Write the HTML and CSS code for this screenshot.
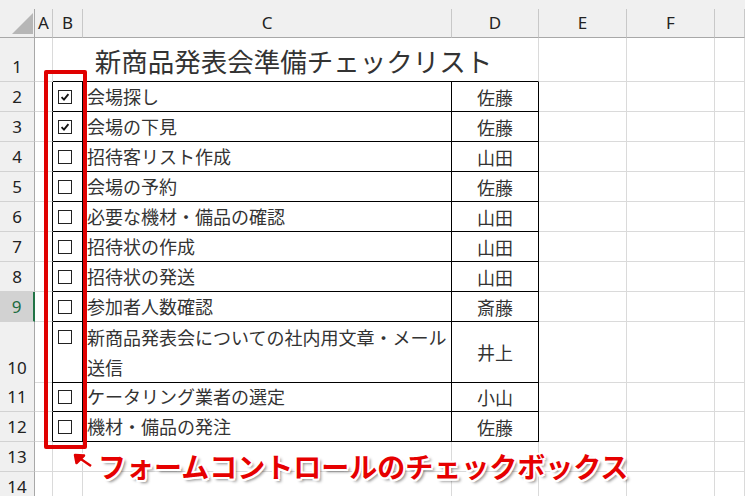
FILE: index.html
```html
<!DOCTYPE html>
<html lang="ja">
  <head>
    <meta charset="UTF-8" />
    <title>新商品発表会準備チェックリスト</title>
    <link rel="stylesheet" href="styles.css">
  </head>
  <body>
    <div class="sheet">
      <!-- column headers -->
      <div class="row head">
        <div class="cell corner"><span class="tri"></span></div>
        <div class="cell hc">A</div>
        <div class="cell hc">B</div>
        <div class="cell hc">C</div>
        <div class="cell hc">D</div>
        <div class="cell hc">E</div>
        <div class="cell hc">F</div>
        <div class="cell hc"></div>
      </div>

      <div class="row r1">
        <div class="cell rn">1</div>
        <div class="cell"></div>
        <div class="cell title">新商品発表会準備チェックリスト</div>
        <div class="cell"></div>
        <div class="cell"></div>
        <div class="cell"></div>
      </div>

      <div class="row">
        <div class="cell rn">2</div>
        <div class="cell edge"></div>
        <div class="cell tb cb"><span class="box on"><svg viewBox="0 0 14 14"><path d="M3 7.2 L5.8 10 L11 3.6" /></svg></span></div>
        <div class="cell tb tx">会場探し</div>
        <div class="cell tb nm">佐藤</div>
        <div class="cell"></div>
        <div class="cell"></div>
        <div class="cell"></div>
      </div>

      <div class="row">
        <div class="cell rn">3</div>
        <div class="cell edge"></div>
        <div class="cell tb cb"><span class="box on"><svg viewBox="0 0 14 14"><path d="M3 7.2 L5.8 10 L11 3.6" /></svg></span></div>
        <div class="cell tb tx">会場の下見</div>
        <div class="cell tb nm">佐藤</div>
        <div class="cell"></div>
        <div class="cell"></div>
        <div class="cell"></div>
      </div>

      <div class="row">
        <div class="cell rn">4</div>
        <div class="cell edge"></div>
        <div class="cell tb cb"><span class="box"></span></div>
        <div class="cell tb tx">招待客リスト作成</div>
        <div class="cell tb nm">山田</div>
        <div class="cell"></div>
        <div class="cell"></div>
        <div class="cell"></div>
      </div>

      <div class="row">
        <div class="cell rn">5</div>
        <div class="cell edge"></div>
        <div class="cell tb cb"><span class="box"></span></div>
        <div class="cell tb tx">会場の予約</div>
        <div class="cell tb nm">佐藤</div>
        <div class="cell"></div>
        <div class="cell"></div>
        <div class="cell"></div>
      </div>

      <div class="row">
        <div class="cell rn">6</div>
        <div class="cell edge"></div>
        <div class="cell tb cb"><span class="box"></span></div>
        <div class="cell tb tx">必要な機材・備品の確認</div>
        <div class="cell tb nm">山田</div>
        <div class="cell"></div>
        <div class="cell"></div>
        <div class="cell"></div>
      </div>

      <div class="row">
        <div class="cell rn">7</div>
        <div class="cell edge"></div>
        <div class="cell tb cb"><span class="box"></span></div>
        <div class="cell tb tx">招待状の作成</div>
        <div class="cell tb nm">山田</div>
        <div class="cell"></div>
        <div class="cell"></div>
        <div class="cell"></div>
      </div>

      <div class="row">
        <div class="cell rn">8</div>
        <div class="cell edge"></div>
        <div class="cell tb cb"><span class="box"></span></div>
        <div class="cell tb tx">招待状の発送</div>
        <div class="cell tb nm">山田</div>
        <div class="cell"></div>
        <div class="cell"></div>
        <div class="cell"></div>
      </div>

      <div class="row">
        <div class="cell rn sel">9</div>
        <div class="cell edge"></div>
        <div class="cell tb cb"><span class="box"></span></div>
        <div class="cell tb tx">参加者人数確認</div>
        <div class="cell tb nm">斎藤</div>
        <div class="cell"></div>
        <div class="cell"></div>
        <div class="cell"></div>
      </div>

      <div class="row tall">
        <div class="cell rn">10</div>
        <div class="cell edge"></div>
        <div class="cell tb cb"><span class="box"></span></div>
        <div class="cell tb tx wrap">新商品発表会についての社内用文章・メール<br>送信</div>
        <div class="cell tb nm">井上</div>
        <div class="cell"></div>
        <div class="cell"></div>
        <div class="cell"></div>
      </div>

      <div class="row">
        <div class="cell rn">11</div>
        <div class="cell edge"></div>
        <div class="cell tb cb"><span class="box"></span></div>
        <div class="cell tb tx">ケータリング業者の選定</div>
        <div class="cell tb nm">小山</div>
        <div class="cell"></div>
        <div class="cell"></div>
        <div class="cell"></div>
      </div>

      <div class="row">
        <div class="cell rn">12</div>
        <div class="cell edge"></div>
        <div class="cell tb cb"><span class="box"></span></div>
        <div class="cell tb tx">機材・備品の発注</div>
        <div class="cell tb nm">佐藤</div>
        <div class="cell"></div>
        <div class="cell"></div>
        <div class="cell"></div>
      </div>

      <div class="row">
        <div class="cell rn">13</div>
        <div class="cell"></div>
        <div class="cell"></div>
        <div class="cell"></div>
        <div class="cell"></div>
        <div class="cell"></div>
        <div class="cell"></div>
        <div class="cell"></div>
      </div>

      <div class="row">
        <div class="cell rn">14</div>
        <div class="cell"></div>
        <div class="cell"></div>
        <div class="cell"></div>
        <div class="cell"></div>
        <div class="cell"></div>
        <div class="cell"></div>
        <div class="cell"></div>
      </div>

      <!-- callout over the sheet -->
      <div class="mark"></div>
      <svg class="arrow" viewBox="0 0 26 22" width="26" height="22">
        <g class="arrow-bg">
          <path d="M5 5 L21 16" />
          <path d="M5 5 L14 5.5 L6.5 13 Z" />
        </g>
        <g class="arrow-fg">
          <path d="M5 5 L21 16" />
          <path d="M5 5 L14 5.5 L6.5 13 Z" />
        </g>
      </svg>
      <div class="note">フォームコントロールのチェックボックス</div>
    </div>
  </body>
</html>
```

FILE: styles.css
```css
body {
  margin: 0;
  background: #fff;
  font-family: "Noto Sans CJK JP", sans-serif;
  color: #333;
  overflow: hidden;
}
.sheet {
  position: relative;
  width: 745px;
  height: 496px;
  overflow: hidden;
}
.row {
  display: grid;
  grid-template-columns: 35px 18px 30px 369px 87px 88px 88px 30px;
  height: 30px;
}
.row.r1 {
  height: 44px;
}
.row.tall {
  height: 60px;
}
.cell {
  box-sizing: border-box;
  border-right: 1px solid #dadada;
  border-bottom: 1px solid #dadada;
  min-width: 0;
}

/* header row */
.head {
  height: 38px;
  padding-top: 9px;
  box-sizing: border-box;
  background: #f0f0f0;
}
.hc {
  border-right-color: #c8c8c8;
  border-bottom-color: #a8a8a8;
  display: flex;
  align-items: center;
  justify-content: center;
  font-family: "Noto Sans", sans-serif;
  font-size: 17px;
  color: #222;
  padding-bottom: 1px;
}
.corner {
  border-right-color: #a8a8a8;
  border-bottom-color: #a8a8a8;
  position: relative;
}
.tri {
  display: block;
  width: 0;
  height: 0;
  margin: 4px 0 0 12px;
  border-left: 21px solid transparent;
  border-bottom: 21px solid #b6b6b6;
}

/* row numbers */
.rn {
  background: #f0f0f0;
  border-right-color: #a8a8a8;
  border-bottom-color: #d2d2d2;
  display: flex;
  align-items: flex-end;
  justify-content: center;
  font-family: "Noto Sans", sans-serif;
  font-size: 17px;
  line-height: 20px;
  padding-bottom: 4px;
  color: #222;
}
.rn.sel {
  background: #d2d2d2;
  border-right: 2px solid #217346;
  color: #1d6b40;
}

/* title */
.title {
  grid-column: span 3;
  border-right-color: #dadada;
  border-bottom-color: #000;
  display: flex;
  align-items: flex-end;
  justify-content: center;
  font-size: 26.5px;
  line-height: 30px;
  padding-bottom: 5px;
  padding-right: 4px;
  white-space: nowrap;
}

/* checklist table */
.edge {
  border-right-color: #000;
}
.tb {
  border-right-color: #000;
  border-bottom-color: #000;
}
.cb {
  padding: 8px 0 0 5px;
}
.box {
  display: block;
  width: 14px;
  height: 14px;
  box-sizing: border-box;
  border: 1px solid #222;
  background: #fff;
}
.box svg {
  display: block;
  width: 12px;
  height: 12px;
}
.box path {
  fill: none;
  stroke: #111;
  stroke-width: 2.2;
}
.tx {
  padding-left: 4px;
  font-size: 18px;
  line-height: 29px;
  white-space: nowrap;
}
.tx.wrap {
  line-height: 30px;
}
.nm {
  display: flex;
  align-items: center;
  justify-content: center;
  font-size: 18px;
}

/* callout */
.mark {
  position: absolute;
  left: 44px;
  top: 70px;
  width: 43px;
  height: 379px;
  box-sizing: border-box;
  border: 4px solid #e00000;
  border-radius: 2px;
}
.arrow {
  position: absolute;
  left: 70px;
  top: 450px;
}
.arrow-bg path {
  stroke: #fff;
  stroke-width: 5;
  fill: #fff;
  stroke-linejoin: round;
}
.arrow-fg path {
  stroke: #e00000;
  stroke-width: 2.5;
  fill: #e00000;
  stroke-linejoin: round;
}
.note {
  position: absolute;
  left: 98px;
  top: 448px;
  font-size: 28px;
  line-height: 36px;
  font-weight: bold;
  color: #e60000;
  white-space: nowrap;
  text-shadow:
    2px 0 #fff, -2px 0 #fff, 0 2px #fff, 0 -2px #fff,
    1.5px 1.5px #fff, -1.5px 1.5px #fff, 1.5px -1.5px #fff, -1.5px -1.5px #fff,
    3px 3px 3px rgba(0, 0, 0, 0.45);
}
```
